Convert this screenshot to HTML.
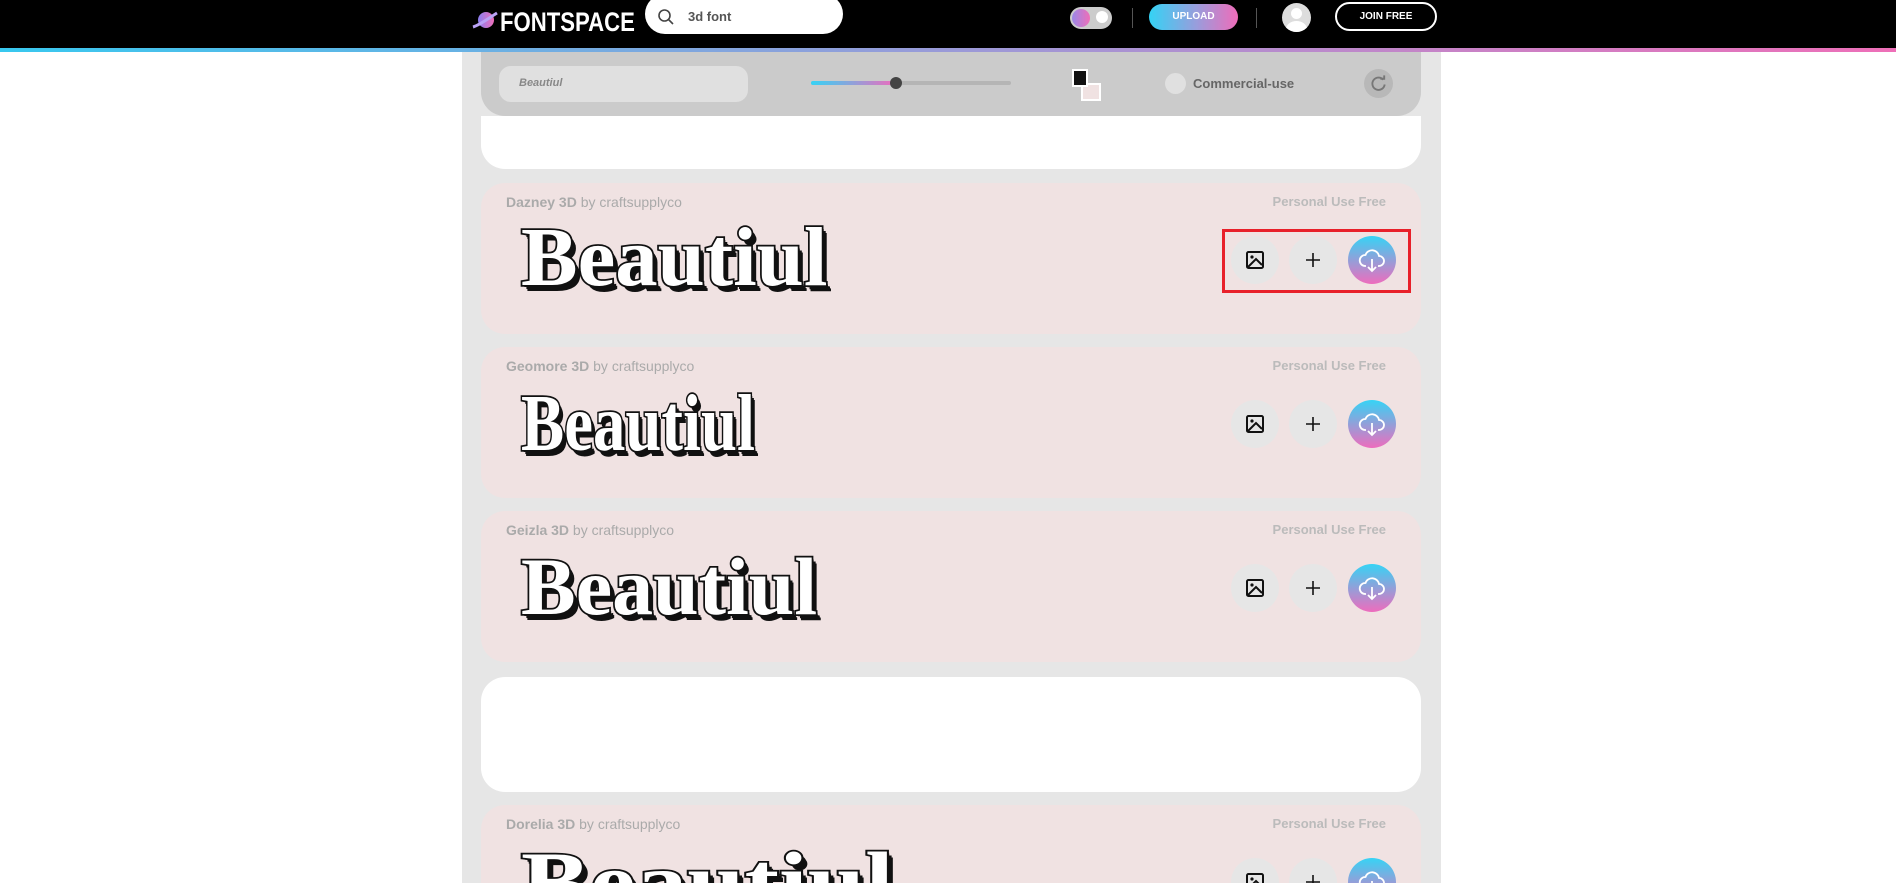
<!DOCTYPE html>
<html><head><meta charset="utf-8"><style>
*{box-sizing:border-box;margin:0;padding:0}
html,body{width:1896px;height:883px;overflow:hidden}
body{background:#fff;font-family:"Liberation Sans",sans-serif;position:relative}
.nav{position:absolute;left:0;top:0;width:1896px;height:48px;background:#000}
.grad{position:absolute;left:0;top:48px;width:1896px;height:4px;background:linear-gradient(90deg,#38c8ef,#9a9ad8 50%,#ee6fb8)}
.abs{position:absolute}
.col{position:absolute;left:462px;top:52px;width:979px;height:831px;background:#e6e6e6}
.card{position:absolute;left:481px;width:940px;height:151px;background:#f0e2e2;border-radius:24px;overflow:hidden}
.title{position:absolute;left:25px;top:11px;font-size:14px;color:#aaa;font-weight:bold}
.title span{font-weight:normal}
.lic{position:absolute;right:35px;top:11px;font-size:13px;color:#bbb;font-weight:bold}
.bt{position:absolute;top:53px;width:48px;height:48px;border-radius:50%;background:#e6e6e6;display:flex;align-items:center;justify-content:center}
.dl{background:linear-gradient(180deg,#36d3f5,#ee6cbd)}
.beau{position:absolute;left:40px;font-family:"Liberation Serif",serif;font-weight:bold;color:#fff;-webkit-text-stroke:3.5px #111;paint-order:stroke fill;text-shadow:2px 2px 0 #111,4px 4px 0 #111,5px 6px 0 #111;transform-origin:left top;white-space:nowrap;line-height:1}
</style></head><body>
<div class="nav"></div>
<div class="grad"></div>
<svg class="abs" style="left:472px;top:10px" width="26" height="22" viewBox="0 0 26 22"><defs><linearGradient id="lg" x1="0" x2="1"><stop offset="0" stop-color="#8a7ff0"/><stop offset="1" stop-color="#ef6fb9"/></linearGradient></defs><ellipse cx="14" cy="10" rx="8" ry="8" fill="url(#lg)"/><path d="M1 17 C8 15 20 6 25 3" stroke="#b9a2f5" stroke-width="3" fill="none"/></svg>
<div class="abs" style="left:500px;top:7px;color:#fff;font-size:27px;font-weight:bold;transform:scaleX(.82);transform-origin:left">FONTSPACE</div>
<div class="abs" style="left:645px;top:-6px;width:198px;height:40px;background:#fff;border-radius:20px"></div>
<svg class="abs" style="left:657px;top:8px" width="18" height="18" viewBox="0 0 18 18"><circle cx="7.5" cy="7.5" r="5.5" stroke="#444" stroke-width="1.6" fill="none"/><path d="M11.5 11.5 L16 16" stroke="#444" stroke-width="1.6"/></svg>
<div class="abs" style="left:688px;top:9px;font-size:13px;color:#555;font-weight:bold">3d font</div>
<div class="abs" style="left:1070px;top:7px;width:42px;height:22px;border-radius:11px;background:#ccc"></div>
<div class="abs" style="left:1072px;top:9px;width:18px;height:18px;border-radius:50%;background:linear-gradient(90deg,#9a87e8,#ee6fb8)"></div>
<div class="abs" style="left:1096px;top:11px;width:12px;height:12px;border-radius:50%;background:#fff"></div>
<div class="abs" style="left:1132px;top:8px;width:1px;height:20px;background:#555"></div>
<div class="abs" style="left:1149px;top:4px;width:89px;height:26px;border-radius:13px;background:linear-gradient(90deg,#34d3f5,#9c9bdb 55%,#ef6cb9);color:#fff;font-size:10px;font-weight:bold;text-align:center;line-height:26px">UPLOAD</div>
<div class="abs" style="left:1256px;top:8px;width:1px;height:20px;background:#555"></div>
<div class="abs" style="left:1282px;top:3px;width:29px;height:29px;border-radius:50%;background:#ddd;overflow:hidden"><div class="abs" style="left:9px;top:5px;width:11px;height:11px;border-radius:50%;background:#fff"></div><div class="abs" style="left:4px;top:18px;width:21px;height:16px;border-radius:50%;background:#fff"></div></div>
<div class="abs" style="left:1335px;top:2px;width:102px;height:29px;border-radius:15px;border:2px solid #fff;color:#fff;font-size:10px;font-weight:bold;text-align:center;line-height:25px">JOIN FREE</div>

<div class="col"></div>
<div class="abs" style="left:481px;top:52px;width:940px;height:64px;background:#cbcbcb;border-radius:0 0 24px 24px"></div>
<div class="abs" style="left:499px;top:66px;width:249px;height:36px;border-radius:12px;background:#e0e0e0"></div>
<div class="abs" style="left:519px;top:77px;font-size:11px;color:#888;font-style:italic;font-weight:bold">Beautiul</div>
<div class="abs" style="left:811px;top:81px;width:200px;height:4px;border-radius:2px;background:#b5b5b5"></div>
<div class="abs" style="left:811px;top:81px;width:85px;height:4px;border-radius:2px;background:linear-gradient(90deg,#36d3f5,#ee6cbd)"></div>
<div class="abs" style="left:890px;top:77px;width:12px;height:12px;border-radius:50%;background:#444"></div>
<div class="abs" style="left:1081px;top:83px;width:20px;height:18px;background:#f0e2e2;border:2px solid #fff"></div>
<div class="abs" style="left:1072px;top:69px;width:16px;height:18px;background:#111;border:2px solid #fff"></div>
<div class="abs" style="left:1165px;top:73px;width:21px;height:21px;border-radius:50%;background:#e0e0e0"></div>
<div class="abs" style="left:1193px;top:76px;font-size:13px;color:#666;font-weight:bold">Commercial-use</div>
<div class="abs" style="left:1364px;top:69px;width:29px;height:29px;border-radius:50%;background:#b8b8b8"></div>
<svg class="abs" style="left:1369px;top:74px" width="19" height="19" viewBox="0 0 20 20"><path d="M15 6 A6.5 6.5 0 1 0 16.5 11" stroke="#777" stroke-width="2" fill="none"/><path d="M12 5 L16 5 L16 1.5" stroke="#777" stroke-width="2" fill="none"/></svg>
<div class="abs" style="left:481px;top:116px;width:940px;height:53px;background:#fff;border-radius:0 0 24px 24px"></div>

<div class="card" style="top:183px"><div class="title">Dazney 3D <span>by craftsupplyco</span></div><div class="lic">Personal Use Free</div>
<div class="beau" style="top:33px;font-size:84px;transform:scaleX(1.01)">Beautiul</div>
<div class="bt" style="left:750px"><svg width="20" height="20" viewBox="0 0 20 20"><rect x="2" y="2" width="16" height="16" rx="1.5" stroke="#111" stroke-width="2" fill="none"/><circle cx="7" cy="7" r="1.6" fill="#111"/><path d="M3 17 L11 9 L17 15" stroke="#111" stroke-width="2" fill="none"/></svg></div>
<div class="bt" style="left:808px"><svg width="16" height="16"><path d="M8 1v14M1 8h14" stroke="#111" stroke-width="1.6"/></svg></div>
<div class="bt dl" style="left:867px"><svg width="28" height="26" viewBox="0 0 28 26"><path d="M8 19 H7 A5.5 5.5 0 0 1 7.5 8 A7 7 0 0 1 21 9 A5 5 0 0 1 21 19 H20" stroke="#fff" stroke-width="1.8" fill="none"/><path d="M14 12v12M10 20l4 4 4-4" stroke="#fff" stroke-width="1.8" fill="none"/></svg></div>
</div>
<div class="abs" style="left:1222px;top:229px;width:189px;height:64px;border:3px solid #e8202a"></div>

<div class="card" style="top:347px"><div class="title">Geomore 3D <span>by craftsupplyco</span></div><div class="lic">Personal Use Free</div>
<div class="beau" style="top:37px;font-size:80px;transform:scaleX(.81)">Beautiul</div>
<div class="bt" style="left:750px"><svg width="20" height="20" viewBox="0 0 20 20"><rect x="2" y="2" width="16" height="16" rx="1.5" stroke="#111" stroke-width="2" fill="none"/><circle cx="7" cy="7" r="1.6" fill="#111"/><path d="M3 17 L11 9 L17 15" stroke="#111" stroke-width="2" fill="none"/></svg></div>
<div class="bt" style="left:808px"><svg width="16" height="16"><path d="M8 1v14M1 8h14" stroke="#111" stroke-width="1.6"/></svg></div>
<div class="bt dl" style="left:867px"><svg width="28" height="26" viewBox="0 0 28 26"><path d="M8 19 H7 A5.5 5.5 0 0 1 7.5 8 A7 7 0 0 1 21 9 A5 5 0 0 1 21 19 H20" stroke="#fff" stroke-width="1.8" fill="none"/><path d="M14 12v12M10 20l4 4 4-4" stroke="#fff" stroke-width="1.8" fill="none"/></svg></div>
</div>

<div class="card" style="top:511px"><div class="title">Geizla 3D <span>by craftsupplyco</span></div><div class="lic">Personal Use Free</div>
<div class="beau" style="top:35px;font-size:82px;transform:scaleX(1.0)">Beautiul</div>
<div class="bt" style="left:750px"><svg width="20" height="20" viewBox="0 0 20 20"><rect x="2" y="2" width="16" height="16" rx="1.5" stroke="#111" stroke-width="2" fill="none"/><circle cx="7" cy="7" r="1.6" fill="#111"/><path d="M3 17 L11 9 L17 15" stroke="#111" stroke-width="2" fill="none"/></svg></div>
<div class="bt" style="left:808px"><svg width="16" height="16"><path d="M8 1v14M1 8h14" stroke="#111" stroke-width="1.6"/></svg></div>
<div class="bt dl" style="left:867px"><svg width="28" height="26" viewBox="0 0 28 26"><path d="M8 19 H7 A5.5 5.5 0 0 1 7.5 8 A7 7 0 0 1 21 9 A5 5 0 0 1 21 19 H20" stroke="#fff" stroke-width="1.8" fill="none"/><path d="M14 12v12M10 20l4 4 4-4" stroke="#fff" stroke-width="1.8" fill="none"/></svg></div>
</div>

<div class="abs" style="left:481px;top:677px;width:940px;height:115px;background:#fff;border-radius:24px"></div>

<div class="card" style="top:805px;height:78px;border-radius:24px 24px 0 0"><div class="title">Dorelia 3D <span>by craftsupplyco</span></div><div class="lic">Personal Use Free</div>
<div class="beau" style="top:34px;font-size:86px;transform:scaleX(1.2)">Beautiul</div>
<div class="bt" style="left:750px"><svg width="20" height="20" viewBox="0 0 20 20"><rect x="2" y="2" width="16" height="16" rx="1.5" stroke="#111" stroke-width="2" fill="none"/><circle cx="7" cy="7" r="1.6" fill="#111"/><path d="M3 17 L11 9 L17 15" stroke="#111" stroke-width="2" fill="none"/></svg></div>
<div class="bt" style="left:808px"><svg width="16" height="16"><path d="M8 1v14M1 8h14" stroke="#111" stroke-width="1.6"/></svg></div>
<div class="bt dl" style="left:867px"><svg width="28" height="26" viewBox="0 0 28 26"><path d="M8 19 H7 A5.5 5.5 0 0 1 7.5 8 A7 7 0 0 1 21 9 A5 5 0 0 1 21 19 H20" stroke="#fff" stroke-width="1.8" fill="none"/><path d="M14 12v12M10 20l4 4 4-4" stroke="#fff" stroke-width="1.8" fill="none"/></svg></div>
</div>
</body></html>
